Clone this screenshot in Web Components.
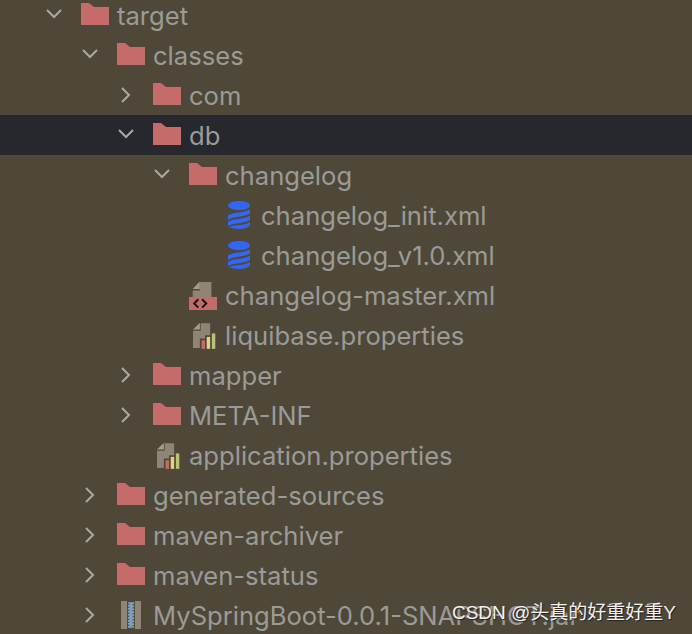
<!DOCTYPE html>
<html>
<head>
<meta charset="utf-8">
<title>Project tree</title>
<style>
  html, body { margin: 0; height: 100%; background: #4f4838; overflow: hidden; }
</style>
</head>
<body>
<project-tree>
  <tree-row level="0" arrow="down" icon="folder">target</tree-row>
  <tree-row level="1" arrow="down" icon="folder">classes</tree-row>
  <tree-row level="2" arrow="right" icon="folder">com</tree-row>
  <tree-row level="2" arrow="down" icon="folder" selected>db</tree-row>
  <tree-row level="3" arrow="down" icon="folder">changelog</tree-row>
  <tree-row level="4" icon="db">changelog_init.xml</tree-row>
  <tree-row level="4" icon="db">changelog_v1.0.xml</tree-row>
  <tree-row level="3" icon="xml">changelog-master.xml</tree-row>
  <tree-row level="3" icon="props">liquibase.properties</tree-row>
  <tree-row level="2" arrow="right" icon="folder">mapper</tree-row>
  <tree-row level="2" arrow="right" icon="folder">META-INF</tree-row>
  <tree-row level="2" icon="props">application.properties</tree-row>
  <tree-row level="1" arrow="right" icon="folder">generated-sources</tree-row>
  <tree-row level="1" arrow="right" icon="folder">maven-archiver</tree-row>
  <tree-row level="1" arrow="right" icon="folder">maven-status</tree-row>
  <tree-row level="1" arrow="right" icon="jar">MySpringBoot-0.0.1-SNAPSHOT.jar</tree-row>
</project-tree>
<water-mark>CSDN @头真的好重好重Y</water-mark>

<script>
const ICONS = {
  folder: `<svg width="28" height="22" viewBox="0 0 28 22" style="margin-top:-2px"><path fill="#c56c6b" d="M0 0H8L13 4H28V22H0Z"/></svg>`,
  db: `<svg width="22" height="28" viewBox="0 0 22 28" style="margin-left:3px">
    <ellipse cx="11" cy="4.500" rx="11" ry="4.500" fill="#3366f5"/>
    <path fill="#3366f5" d="M22 8V12.500C16 16 5 15.500 0 19V14.500C4 11 17 12 22 8Z"/>
    <path fill="#3366f5" d="M22 14.500V19C16 22.500 5 22 0 25V21C4 17.500 17 18.500 22 14.500Z"/>
    <path fill="#3366f5" d="M22 21V24C21 26.500 15 28 11 28C7 28 3 27.300 1 26C6 23.500 17 25 22 21Z"/>
  </svg>`,
  xml: `<svg width="30" height="30" viewBox="0 0 30 30" style="margin-top:2px">
    <path fill="#8f8577" d="M4 16V9H11.500V0H24V16Z"/>
    <path fill="#a69c8d" d="M4 7.500L11 0H11.500V7.500Z"/>
    <path fill="#c56c6b" d="M0 16H30V30H0Z"/>
    <path fill="none" stroke="#111" stroke-width="2" d="M10 18.500L5.500 23L10 27.500M14 18.500L18.500 23L14 27.500"/>
  </svg>`,
  props: `<svg width="28" height="30" viewBox="0 0 28 30" style="margin-left:4px;margin-top:2px">
    <path fill="#8f8577" d="M0 29V9H9V0H20V14H14V18H8V29Z"/>
    <path fill="#a69c8d" d="M0 7.500L7.500 0H8V7.500Z"/>
    <path fill="#c56c6b" d="M10 20H14V30H10Z"/>
    <path fill="#e8cf83" d="M16 16H20V30H16Z"/>
    <path fill="#b9c576" d="M22 12H26V30H22Z"/>
  </svg>`,
  jar: `<svg width="20" height="28" viewBox="0 0 20 28" style="margin-left:4px">
    <path fill="#8f8577" d="M0 0H6V28H0ZM14 0H20V28H14Z"/>
    <path fill="none" stroke="#7ca4c6" stroke-width="1.500" d="M7 2H13L7 5H13L7 8H13L7 11H13L7 14H13L7 17H13L7 20H13L7 23H13L7 26H13"/>
  </svg>`
};

const CHEVRONS = {
  down: `<svg width="18" height="18" viewBox="0 0 18 18"><path fill="none" stroke="#a8a8a5" stroke-width="2" d="M2 4L9 11L16 4"/></svg>`,
  right: `<svg width="18" height="18" viewBox="0 0 18 18"><path fill="none" stroke="#a8a8a5" stroke-width="2" d="M5 2L12 9L5 16"/></svg>`
};

class ProjectTree extends HTMLElement {
  constructor() {
    super();
    this.root = this.attachShadow({ mode: "open" });
    this.root.innerHTML = `<style>
      :host {
        display: block;
        margin-top: -5px;
        font-family: Inter, "Liberation Sans", sans-serif;
        font-size: 25.6px;
        color: #9a9b98;
      }
    </style><slot></slot>`;
  }
}
customElements.define("project-tree", ProjectTree);

class TreeRow extends HTMLElement {
  constructor() {
    super();
    const level = parseInt(this.getAttribute("level") || "0");
    const arrow = this.getAttribute("arrow");
    const icon = this.getAttribute("icon");
    this.root = this.attachShadow({ mode: "open" });
    this.root.innerHTML = `<style>
      :host {
        display: flex;
        align-items: center;
        height: 40px;
        white-space: nowrap;
      }
      :host([selected]) { background: #26282d; }
      .arrow { display: flex; width: 18px; height: 18px; margin-right: 18px; }
      .icon { display: flex; align-items: center; width: 28px; height: 30px; margin-right: 8px; }
    </style>
    <span class="arrow">${arrow ? CHEVRONS[arrow] : ""}</span>
    <span class="icon">${ICONS[icon]}</span>
    <slot></slot>`;
    this.style.paddingLeft = (45 + level * 36) + "px";
  }
}
customElements.define("tree-row", TreeRow);

class WaterMark extends HTMLElement {
  constructor() {
    super();
    this.root = this.attachShadow({ mode: "open" });
    this.root.innerHTML = `<style>
      :host {
        position: absolute;
        right: 16px;
        bottom: 9px;
        font-family: "Liberation Sans", "Noto Sans CJK SC", sans-serif;
        font-size: 19px;
        line-height: 24px;
        color: #f2f2f2;
        text-shadow: 1px 1px 1px #222;
        white-space: nowrap;
      }
    </style><slot></slot>`;
  }
}
customElements.define("water-mark", WaterMark);
</script>
</body>
</html>
